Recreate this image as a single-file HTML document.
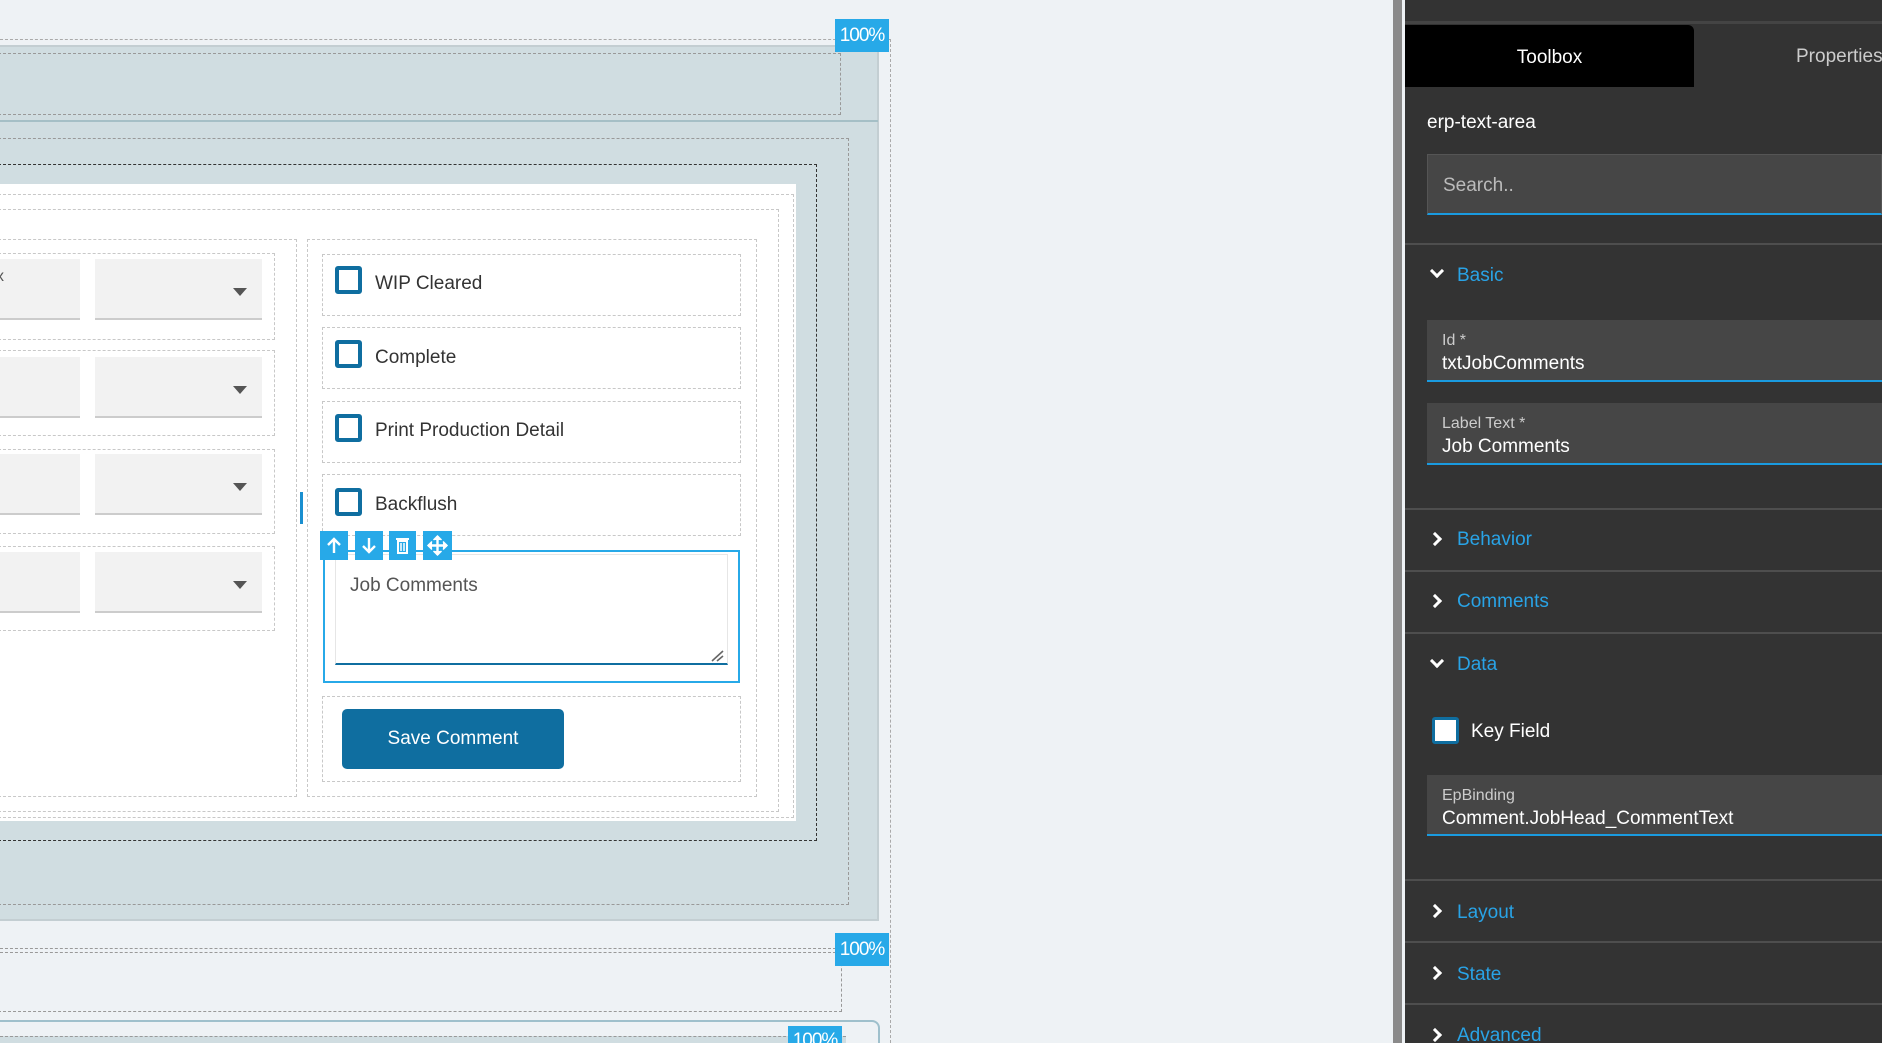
<!DOCTYPE html>
<html style="overflow:hidden;height:1043px"><head><meta charset="utf-8"><style>
*{box-sizing:border-box;margin:0;padding:0}
html,body{overflow:hidden}
body{width:1882px;height:1043px;overflow:hidden;background:#eef2f5;position:relative;font-family:"Liberation Sans",sans-serif}
.a{position:absolute}
.dl{border:1px dashed #999}
.dg{border:1px dashed #c8c8c8}
.lbl{position:absolute;background:#27a9e8;color:#fff;font-size:19px;display:flex;align-items:center;justify-content:center;letter-spacing:-1px}
.fld{position:absolute;background:#f2f2f2;border-bottom:2px solid #ccc}
.arr{position:absolute;width:0;height:0;border-left:7px solid transparent;border-right:7px solid transparent;border-top:8px solid #555}
.cb{position:absolute;width:27px;height:28px;border:4px solid #0f6ea0;border-radius:3px;background:#fff}
.ct{position:absolute;font-size:19px;color:#333}
.tb{position:absolute;top:531px;height:29px;background:#27a9e8}
.sep{position:absolute;left:1405px;right:0;height:2px;background:#4e4e4e}
.sec{position:absolute;left:1457px;font-size:19px;color:#29a3e6}
.chev{position:absolute;left:1432px;width:10px;height:10px;border-right:3px solid #fff;border-bottom:3px solid #fff}
.pf{position:absolute;left:1427px;right:0;background:#464646;border-bottom:2px solid #1a9be0}
.pf .l{position:absolute;left:15px;top:12px;font-size:16px;color:#ccc}
.pf .v{position:absolute;left:15px;top:33px;font-size:19px;color:#fff}
</style></head><body>
<div class="a" style="left:0;top:39px;width:891px;border-top:1px dashed #aaa"></div>
<div class="a" style="left:890px;top:39px;height:1004px;border-left:1px dashed #aaa"></div>
<div class="a" style="left:0;top:45px;width:879px;height:876px;background:#d0dde1;border-top:2px solid #c3ced2;border-right:2px solid #c3ced2;border-bottom:2px solid #c3ced2"></div>
<div class="lbl" style="left:835px;top:19px;width:54px;height:33px">100%</div>
<div class="a dl" style="left:-2px;top:53px;width:843px;height:62px"></div>
<div class="a" style="left:0;top:120px;width:878px;height:2px;background:#a5bfc6"></div>
<div class="a dl" style="left:-2px;top:138px;width:851px;height:767px"></div>
<div class="a" style="left:-2px;top:164px;width:819px;height:677px;border:1px dashed #333"></div>
<div class="a" style="left:0;top:184px;width:796px;height:637px;background:#fff"></div>
<div class="a dg" style="left:-2px;top:194px;width:796px;height:624px"></div>
<div class="a dg" style="left:-2px;top:209px;width:781px;height:603px"></div>
<div class="a dg" style="left:-2px;top:239px;width:299px;height:558px"></div>
<div class="a dg" style="left:307px;top:239px;width:450px;height:558px"></div>
<div class="a dg" style="left:-2px;top:253px;width:277px;height:87px"></div>
<div class="a dg" style="left:-2px;top:350px;width:277px;height:86px"></div>
<div class="a dg" style="left:-2px;top:449px;width:277px;height:85px"></div>
<div class="a dg" style="left:-2px;top:546px;width:277px;height:85px"></div>
<div class="fld" style="left:0;top:259px;width:80px;height:61px"></div>
<div class="a" style="left:-4px;top:268px;font-size:16px;color:#555">x</div>
<div class="fld" style="left:95px;top:259px;width:167px;height:61px"></div><div class="arr" style="left:233px;top:288px"></div>
<div class="fld" style="left:0;top:357px;width:80px;height:61px"></div>
<div class="fld" style="left:95px;top:357px;width:167px;height:61px"></div><div class="arr" style="left:233px;top:386px"></div>
<div class="fld" style="left:0;top:454px;width:80px;height:61px"></div>
<div class="fld" style="left:95px;top:454px;width:167px;height:61px"></div><div class="arr" style="left:233px;top:483px"></div>
<div class="fld" style="left:0;top:552px;width:80px;height:61px"></div>
<div class="fld" style="left:95px;top:552px;width:167px;height:61px"></div><div class="arr" style="left:233px;top:581px"></div>
<div class="a" style="left:300px;top:492px;width:3px;height:32px;background:#1a8fd0"></div>
<div class="a dg" style="left:322px;top:254px;width:419px;height:62px"></div>
<div class="a dg" style="left:322px;top:327px;width:419px;height:62px"></div>
<div class="a dg" style="left:322px;top:401px;width:419px;height:62px"></div>
<div class="a dg" style="left:322px;top:474px;width:419px;height:62px"></div>
<div class="cb" style="left:335px;top:266px"></div><div class="ct" style="left:375px;top:273px">WIP Cleared</div>
<div class="cb" style="left:335px;top:340px"></div><div class="ct" style="left:375px;top:347px">Complete</div>
<div class="cb" style="left:335px;top:414px"></div><div class="ct" style="left:375px;top:420px">Print Production Detail</div>
<div class="cb" style="left:335px;top:488px"></div><div class="ct" style="left:375px;top:494px">Backflush</div>
<div class="a" style="left:323px;top:550px;width:417px;height:133px;border:2px solid #27a9e8"></div>
<div class="a" style="left:335px;top:554px;width:393px;height:111px;border:1px solid #e6e6e6;border-bottom:2px solid #0f6ea0;background:#fff"></div>
<div class="a" style="left:350px;top:575px;font-size:19px;color:#555">Job Comments</div>
<svg class="a" style="left:711px;top:650px" width="14" height="12"><path d="M1 11 L12 1 M6 11 L12 6" stroke="#666" stroke-width="1.6"/></svg>
<div class="tb" style="left:320px;width:28px"><svg width="28" height="29"><path d="M14 22V8M8 14l6-6 6 6" stroke="#fff" stroke-width="2.4" fill="none"/></svg></div>
<div class="tb" style="left:355px;width:28px"><svg width="28" height="29"><path d="M14 7v14M8 15l6 6 6-6" stroke="#fff" stroke-width="2.4" fill="none"/></svg></div>
<div class="tb" style="left:389px;width:27px"><svg width="27" height="29"><path d="M7 8h13M9 10h9v12H9z" stroke="#fff" stroke-width="2" fill="none"/><path d="M12 12v8M15 12v8" stroke="#fff" stroke-width="1.5"/></svg></div>
<div class="tb" style="left:423px;width:29px"><svg width="29" height="29"><path d="M14.5 5v19M5 14.5h19" stroke="#fff" stroke-width="2.4"/><path d="M10.5 9l4-4 4 4M10.5 20l4 4 4-4M9 10.5l-4 4 4 4M20 10.5l4 4-4 4" fill="#fff" stroke="#fff" stroke-width="1.5"/></svg></div>
<div class="a dg" style="left:322px;top:696px;width:419px;height:86px"></div>
<div class="a" style="left:342px;top:709px;width:222px;height:60px;background:#0f6ea0;border-radius:5px;color:#fff;font-size:19px;display:flex;align-items:center;justify-content:center">Save Comment</div>
<div class="a" style="left:0;top:948px;width:836px;border-top:1px dashed #999"></div>
<div class="a" style="left:0;top:952px;width:836px;border-top:1px dashed #999"></div>
<div class="a dl" style="left:-2px;top:953px;width:844px;height:59px;border-top:none"></div>
<div class="lbl" style="left:835px;top:933px;width:54px;height:33px">100%</div>
<div class="a" style="left:-10px;top:1020px;width:890px;height:23px;border:2px solid #9fc0cc;border-bottom:none;border-radius:8px 8px 0 0;background:#eef2f5"></div>
<div class="a" style="left:0;top:1036px;width:846px;height:7px;background:#d0dde1;border-top:1px dashed #999"></div>
<div class="lbl" style="left:788px;top:1026px;width:54px;height:17px;align-items:flex-start;padding-top:4px;overflow:hidden">100%</div>
<div class="a" style="left:1393px;top:0;width:9px;height:1043px;background:#8a8a8a"></div>
<div class="a" style="left:1405px;top:0;right:0;height:1043px;background:#333"></div>
<div class="a" style="left:1405px;top:21px;right:0;height:3px;background:#444"></div>
<div class="a" style="left:1405px;top:25px;width:289px;height:62px;background:#000;border-radius:0 6px 0 0;color:#fff;font-size:19px;display:flex;align-items:center;justify-content:center;padding-top:3px">Toolbox</div>
<div class="a" style="left:1796px;top:46px;font-size:19px;color:#ccc;white-space:nowrap">Properties</div>
<div class="a" style="left:1427px;top:112px;font-size:19px;color:#fff">erp-text-area</div>
<div class="a" style="left:1427px;top:154px;right:0;height:61px;background:#464646;border:1px solid #555;border-bottom:2px solid #1a9be0"><div class="a" style="left:15px;top:20px;font-size:19px;color:#bbb">Search..</div></div>
<div class="sep" style="top:243px"></div>
<div class="chev" style="top:266px;transform:rotate(45deg)"></div><div class="sec" style="top:265px">Basic</div>
<div class="pf" style="top:320px;height:62px"><div class="l">Id *</div><div class="v">txtJobComments</div></div>
<div class="pf" style="top:403px;height:62px"><div class="l">Label Text *</div><div class="v">Job Comments</div></div>
<div class="sep" style="top:508px"></div>
<div class="chev" style="top:534px;left:1430px;transform:rotate(-45deg)"></div><div class="sec" style="top:529px">Behavior</div>
<div class="sep" style="top:570px"></div>
<div class="chev" style="top:596px;left:1430px;transform:rotate(-45deg)"></div><div class="sec" style="top:591px">Comments</div>
<div class="sep" style="top:632px"></div>
<div class="chev" style="top:656px;transform:rotate(45deg)"></div><div class="sec" style="top:654px">Data</div>
<div class="a" style="left:1432px;top:717px;width:27px;height:27px;background:#fff;border:3px solid #0f6ea0;border-radius:3px"></div>
<div class="a" style="left:1471px;top:721px;font-size:19px;color:#fff">Key Field</div>
<div class="pf" style="top:775px;height:61px"><div class="l">EpBinding</div><div class="v">Comment.JobHead_CommentText</div></div>
<div class="sep" style="top:879px"></div>
<div class="chev" style="top:906px;left:1430px;transform:rotate(-45deg)"></div><div class="sec" style="top:902px">Layout</div>
<div class="sep" style="top:941px"></div>
<div class="chev" style="top:968px;left:1430px;transform:rotate(-45deg)"></div><div class="sec" style="top:964px">State</div>
<div class="sep" style="top:1003px"></div>
<div class="chev" style="top:1030px;left:1430px;transform:rotate(-45deg)"></div><div class="sec" style="top:1025px">Advanced</div>
</body></html>
